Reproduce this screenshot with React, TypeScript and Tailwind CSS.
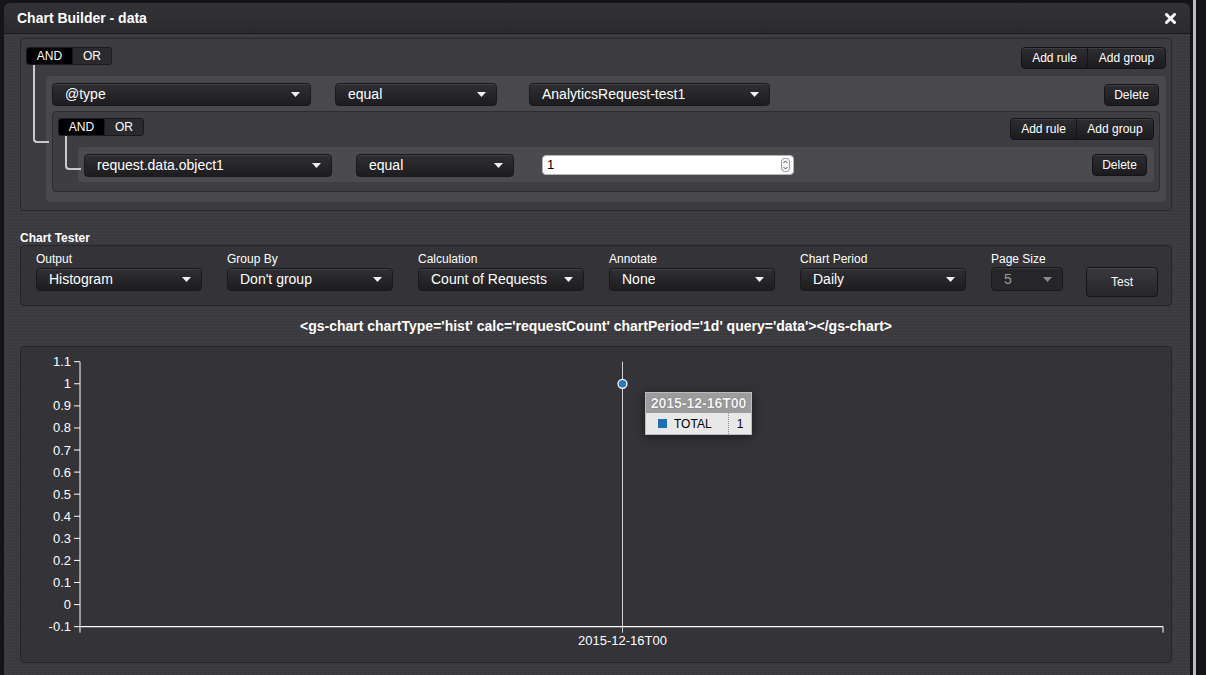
import React from "react"

const FONT = "font-['Liberation_Sans',Arial,sans-serif]"

function Caret({ muted }: { muted?: boolean }) {
  return (
    <svg width="9" height="5" viewBox="0 0 9 5" className="shrink-0">
      <path d="M0 0 L9 0 L4.5 5 Z" fill={muted ? "#8a8a8e" : "#f2f2f2"} />
    </svg>
  )
}

function Select({ label, className = "", muted }: { label: string; className?: string; muted?: boolean }) {
  return (
    <div
      className={`flex items-center justify-between rounded-[4px] border border-[#19191b] pl-[12px] pr-[10px] text-[14px] shadow-[inset_0_1px_0_rgba(255,255,255,0.08)] ${
        muted
          ? "bg-[#26262a] text-[#9a9a9e]"
          : "bg-gradient-to-b from-[#303034] to-[#1d1d20] text-white"
      } ${className}`}
    >
      <span className="truncate">{label}</span>
      <Caret muted={muted} />
    </div>
  )
}

function Btn({ children, className = "" }: { children: React.ReactNode; className?: string }) {
  return (
    <div
      className={`flex items-center justify-center border border-[#141416] bg-gradient-to-b from-[#2e2e32] to-[#1c1c1f] text-[12px] text-white shadow-[inset_0_1px_0_rgba(255,255,255,0.08)] ${className}`}
    >
      {children}
    </div>
  )
}

function Conditions() {
  return (
    <div className="flex h-[18px] overflow-hidden rounded-[3px] border border-[#1a1a1c] text-[12px] text-white">
      <div className="flex w-[45px] items-center justify-center bg-black">AND</div>
      <div className="flex w-[39px] items-center justify-center border-l border-[#1a1a1c] bg-[#2b2b2f]">OR</div>
    </div>
  )
}

function AddButtons({ ruleW, groupW }: { ruleW: string; groupW: string }) {
  return (
    <div className="flex h-[22px]">
      <Btn className={`${ruleW} rounded-l-[4px]`}>Add rule</Btn>
      <Btn className={`${groupW} -ml-px rounded-r-[4px]`}>Add group</Btn>
    </div>
  )
}

function QueryBuilder() {
  return (
    <div className="relative rounded-[4px] border border-[#29292d] bg-[#3b3b40] px-[5px] pt-[8px] pb-[8px]">
      {/* outer connector */}
      <div className="absolute left-[12px] top-[26px] h-[78px] w-[16px] rounded-bl-[4px] border-b-2 border-l-2 border-[#c9c9c9]" />
      <div className="flex items-start justify-between">
        <Conditions />
        <AddButtons ruleW="w-[67px]" groupW="w-[79px]" />
      </div>

      <div className="ml-[20px] mt-[7px] rounded-[4px] bg-[#48484d] px-[6px] pt-[7px] pb-[10px]">
        <div className="flex h-[23px] items-center pr-[1px]">
          <Select label="@type" className="h-[23px] w-[259px]" />
          <Select label="equal" className="ml-[24px] h-[23px] w-[162px]" />
          <Select label="AnalyticsRequest-test1" className="ml-[32px] h-[23px] w-[241px]" />
          <Btn className="ml-auto h-[22px] w-[55px] rounded-[4px]">Delete</Btn>
        </div>

        {/* inner group */}
        <div className="relative mt-[5px] rounded-[4px] border border-[#2c2c30] bg-[#3d3d42] px-[5px] pt-[6px] pb-[9px]">
          <div className="absolute left-[12px] top-[24px] h-[34px] w-[16px] rounded-bl-[4px] border-b-2 border-l-2 border-[#c9c9c9]" />
          <div className="flex items-start justify-between">
            <Conditions />
            <AddButtons ruleW="w-[67px]" groupW="w-[78px]" />
          </div>
          <div className="ml-[20px] mt-[7px] rounded-[4px] bg-[#4a4a4f] px-[6px] pt-[6px] pb-[5px]">
            <div className="flex h-[24px] items-center pr-[1px]">
              <Select label="request.data.object1" className="h-[23px] w-[248px]" />
              <Select label="equal" className="ml-[24px] h-[23px] w-[158px]" />
              <div className="ml-[28px] flex h-[20px] w-[252px] items-center justify-between rounded-[4px] border border-[#b5b5b5] bg-white pl-[4px] pr-[3px] text-[13px] text-black">
                <span>1</span>
                <svg width="9" height="14" viewBox="0 0 9 14">
                  <rect x="0.5" y="0.5" width="8" height="13" rx="3" fill="#f4f4f4" stroke="#9a9a9a" />
                  <path d="M2.5 5 L4.5 3 L6.5 5 M2.5 9 L4.5 11 L6.5 9" stroke="#555" fill="none" strokeWidth="1" />
                </svg>
              </div>
              <Btn className="ml-auto h-[22px] w-[55px] rounded-[4px]">Delete</Btn>
            </div>
          </div>
        </div>
      </div>
    </div>
  )
}

const FIELDS = [
  { label: "Output", value: "Histogram" },
  { label: "Group By", value: "Don't group" },
  { label: "Calculation", value: "Count of Requests" },
  { label: "Annotate", value: "None" },
  { label: "Chart Period", value: "Daily" },
]

function ChartTester() {
  return (
    <div>
      <div className="mt-[20px] text-[12px] font-bold leading-[14px] text-white">Chart Tester</div>
      <div className="flex items-start gap-[25px] rounded-[4px] border border-[#26262a] bg-[#333338] pl-[15px] pt-[6px] pb-[8px]">
        {FIELDS.map((f) => (
          <div key={f.label} className="w-[166px]">
            <div className="text-[12px] leading-[14px] text-white">{f.label}</div>
            <Select label={f.value} className="mt-[2px] h-[23px] w-[166px]" />
          </div>
        ))}
        <div className="w-[72px]">
          <div className="text-[12px] leading-[14px] text-white">Page Size</div>
          <Select label="5" muted className="mt-[1px] h-[24px] w-[72px] pl-[12px]" />
        </div>
        <Btn className="-ml-[2px] mt-[15px] h-[30px] w-[72px] rounded-[4px] bg-gradient-to-b from-[#3a3a3e] to-[#27272b]">
          Test
        </Btn>
      </div>
    </div>
  )
}

const TICKS = ["1.1", "1", "0.9", "0.8", "0.7", "0.6", "0.5", "0.4", "0.3", "0.2", "0.1", "0", "-0.1"]

function Chart() {
  const top = 14.7
  const step = 22.08
  const base = top + step * 12
  return (
    <div className="relative mt-[12px] h-[317px] rounded-[4px] border border-[#25252a] bg-[#333338]">
      <svg width="1150" height="315" className="absolute left-0 top-0">
        <g fontFamily="'Liberation Sans', Arial, sans-serif" fontSize="13" fill="#ffffff">
          {TICKS.map((t, i) => (
            <g key={t}>
              <line x1="53" x2="59" y1={top + step * i} y2={top + step * i} stroke="#ffffff" strokeWidth="1" />
              <text x="50" y={top + step * i + 4.5} textAnchor="end">
                {t}
              </text>
            </g>
          ))}
          <line x1="59" x2="59" y1={top} y2={base + 6} stroke="#ffffff" strokeWidth="1" />
          <line x1="59" x2="1142" y1={base} y2={base} stroke="#ffffff" strokeWidth="1.2" />
          <line x1="1142" x2="1142" y1={base} y2={base + 6} stroke="#ffffff" strokeWidth="1" />
          <line x1="601.5" x2="601.5" y1={top} y2={base + 6} stroke="#d0d0d0" strokeWidth="1" />
          <text x="601.5" y={base + 18} textAnchor="middle">
            2015-12-16T00
          </text>
          <circle cx="601.5" cy={top + step} r="4.5" fill="#2a78c2" stroke="#ffffff" strokeWidth="1.3" />
        </g>
      </svg>
      <div className="absolute left-[624px] top-[45px] w-[107px] border border-[#bcbcbc] shadow-[0_2px_10px_rgba(0,0,0,0.45)]">
        <div className="flex h-[20px] items-center justify-center bg-[#9c9c9c] text-[14px] font-bold text-[#f4f4f4] [text-shadow:0_0_1px_#333]">
          2015-12-16T00
        </div>
        <div className="flex h-[21px] items-center bg-[#e8e8e8] text-[12px] text-black">
          <div className="ml-[12px] h-[9px] w-[9px] bg-[#1f6fb4]" />
          <span className="ml-[7px]">TOTAL</span>
          <div className="ml-auto h-full border-l border-dotted border-[#888]" />
          <span className="w-[22px] text-center">1</span>
        </div>
      </div>
    </div>
  )
}

export default function App() {
  return (
    <div className={`flex h-[675px] w-[1206px] overflow-hidden bg-[#151517] ${FONT}`}>
      <div className="ml-[4px] mt-[3px] flex w-[1186px] flex-col overflow-hidden rounded-t-[6px]">
        <div className="flex h-[31px] shrink-0 items-center justify-between border-b border-[#1b1b1e] bg-gradient-to-b from-[#323237] to-[#2a2a2f] pl-[13px] pr-[14px]">
          <span className="text-[14px] font-bold text-white">Chart Builder - data</span>
          <svg width="11" height="11" viewBox="0 0 11 11">
            <path d="M1.5 1.5 L9.5 9.5 M9.5 1.5 L1.5 9.5" stroke="#ffffff" strokeWidth="3" strokeLinecap="round" />
          </svg>
        </div>
        <div className="flex-1 bg-[#3a3a3f] bg-[image:repeating-linear-gradient(0deg,rgba(255,255,255,0.025)_0px,rgba(255,255,255,0.025)_1px,transparent_1px,transparent_3px),repeating-linear-gradient(90deg,rgba(0,0,0,0.05)_0px,rgba(0,0,0,0.05)_1px,transparent_1px,transparent_4px)] pl-[16px] pr-[18px] pt-[4px]">
          <QueryBuilder />
          <ChartTester />
          <div className="mt-[12px] text-center text-[14px] font-bold leading-[16px] text-white">
            {"<gs-chart chartType='hist' calc='requestCount' chartPeriod='1d' query='data'></gs-chart>"}
          </div>
          <Chart />
        </div>
      </div>
      <div className="flex w-[16px] justify-start">
        <div className="ml-[3px] h-full w-[3px] bg-[#bdbdbd]" />
      </div>
    </div>
  )
}
